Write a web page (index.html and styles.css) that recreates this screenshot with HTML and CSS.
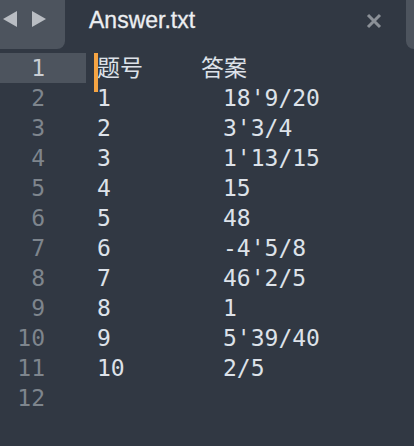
FILE: index.html
```html
<!DOCTYPE html>
<html>
<head>
<meta charset="utf-8">
<link rel="stylesheet" href="styles.css">
</head>
<body>
<div class="window">
  <div class="tabbar">
    <div class="nav">
      <svg class="arrow" width="18" height="18" viewBox="0 0 18 18"><polygon points="16,1 16,17 2,9" /></svg>
      <svg class="arrow" width="18" height="18" viewBox="0 0 18 18"><polygon points="2,1 2,17 16,9" /></svg>
    </div>
    <div class="tab">
      <span class="title">Answer.txt</span>
      <svg class="close" width="16" height="16" viewBox="0 0 16 16"><path d="M2 2 L14 14 M14 2 L2 14" /></svg>
    </div>
    <div class="side"></div>
  </div>
  <div class="editor">
    <div class="gutter">
      <div class="ln current">1</div>
      <div class="ln">2</div>
      <div class="ln">3</div>
      <div class="ln">4</div>
      <div class="ln">5</div>
      <div class="ln">6</div>
      <div class="ln">7</div>
      <div class="ln">8</div>
      <div class="ln">9</div>
      <div class="ln">10</div>
      <div class="ln">11</div>
      <div class="ln">12</div>
    </div>
    <div class="code">
      <span class="caret"></span>
      <div class="line"><span class="head">题号</span><span>答案</span></div>
      <div class="line"><span class="num">1</span><span>18'9/20</span></div>
      <div class="line"><span class="num">2</span><span>3'3/4</span></div>
      <div class="line"><span class="num">3</span><span>1'13/15</span></div>
      <div class="line"><span class="num">4</span><span>15</span></div>
      <div class="line"><span class="num">5</span><span>48</span></div>
      <div class="line"><span class="num">6</span><span>-4'5/8</span></div>
      <div class="line"><span class="num">7</span><span>46'2/5</span></div>
      <div class="line"><span class="num">8</span><span>1</span></div>
      <div class="line"><span class="num">9</span><span>5'39/40</span></div>
      <div class="line"><span class="num">10</span><span>2/5</span></div>
      <div class="line"></div>
    </div>
  </div>
</div>
</body>
</html>
```
FILE: styles.css
```css
html, body {
  margin: 0;
  padding: 0;
  background: #313843;
}
.window {
  width: 414px;
  height: 446px;
  overflow: hidden;
  background: #313843;
}
.tabbar {
  display: flex;
  height: 49px;
}
.nav {
  width: 65px;
  background: #4d545e;
  border-bottom-right-radius: 8px;
  display: flex;
  align-items: flex-start;
  padding-top: 10px;
  padding-left: 1px;
  gap: 11px;
  box-sizing: border-box;
}
.arrow polygon {
  fill: #b9bdc3;
}
.tab {
  flex: 1;
  display: flex;
  align-items: flex-start;
  padding-left: 24px;
  padding-top: 6px;
  box-sizing: border-box;
}
.title {
  font-family: "Liberation Sans", Arial, sans-serif;
  font-size: 23px;
  line-height: 28px;
  color: #eceef1;
  -webkit-text-stroke: 0.3px #eceef1;
}
.close {
  margin-left: auto;
  margin-right: 24px;
  margin-top: 7px;
}
.close path {
  stroke: #8b9097;
  stroke-width: 3;
  fill: none;
}
.side {
  width: 8px;
  background: #4d545e;
  border-bottom-left-radius: 8px;
}
.editor {
  display: flex;
  padding-top: 4px;
  font-family: "DejaVu Sans Mono", "Noto Sans CJK SC", monospace;
  font-size: 23px;
}
.gutter {
  width: 86px;
}
.ln {
  height: 30px;
  line-height: 30px;
  text-align: right;
  padding-right: 41px;
  color: #7e858d;
}
.ln.current {
  background: #4d545e;
  color: #c9cdd3;
}
.code {
  position: relative;
  padding-left: 11px;
  color: #dde2e9;
}
.caret {
  position: absolute;
  left: 8px;
  top: 0;
  width: 4px;
  height: 39px;
  background: #f5a443;
}
.line {
  height: 30px;
  line-height: 30px;
  display: flex;
  white-space: pre;
}
.head {
  width: 104px;
}
.num {
  width: 126px;
}
```
